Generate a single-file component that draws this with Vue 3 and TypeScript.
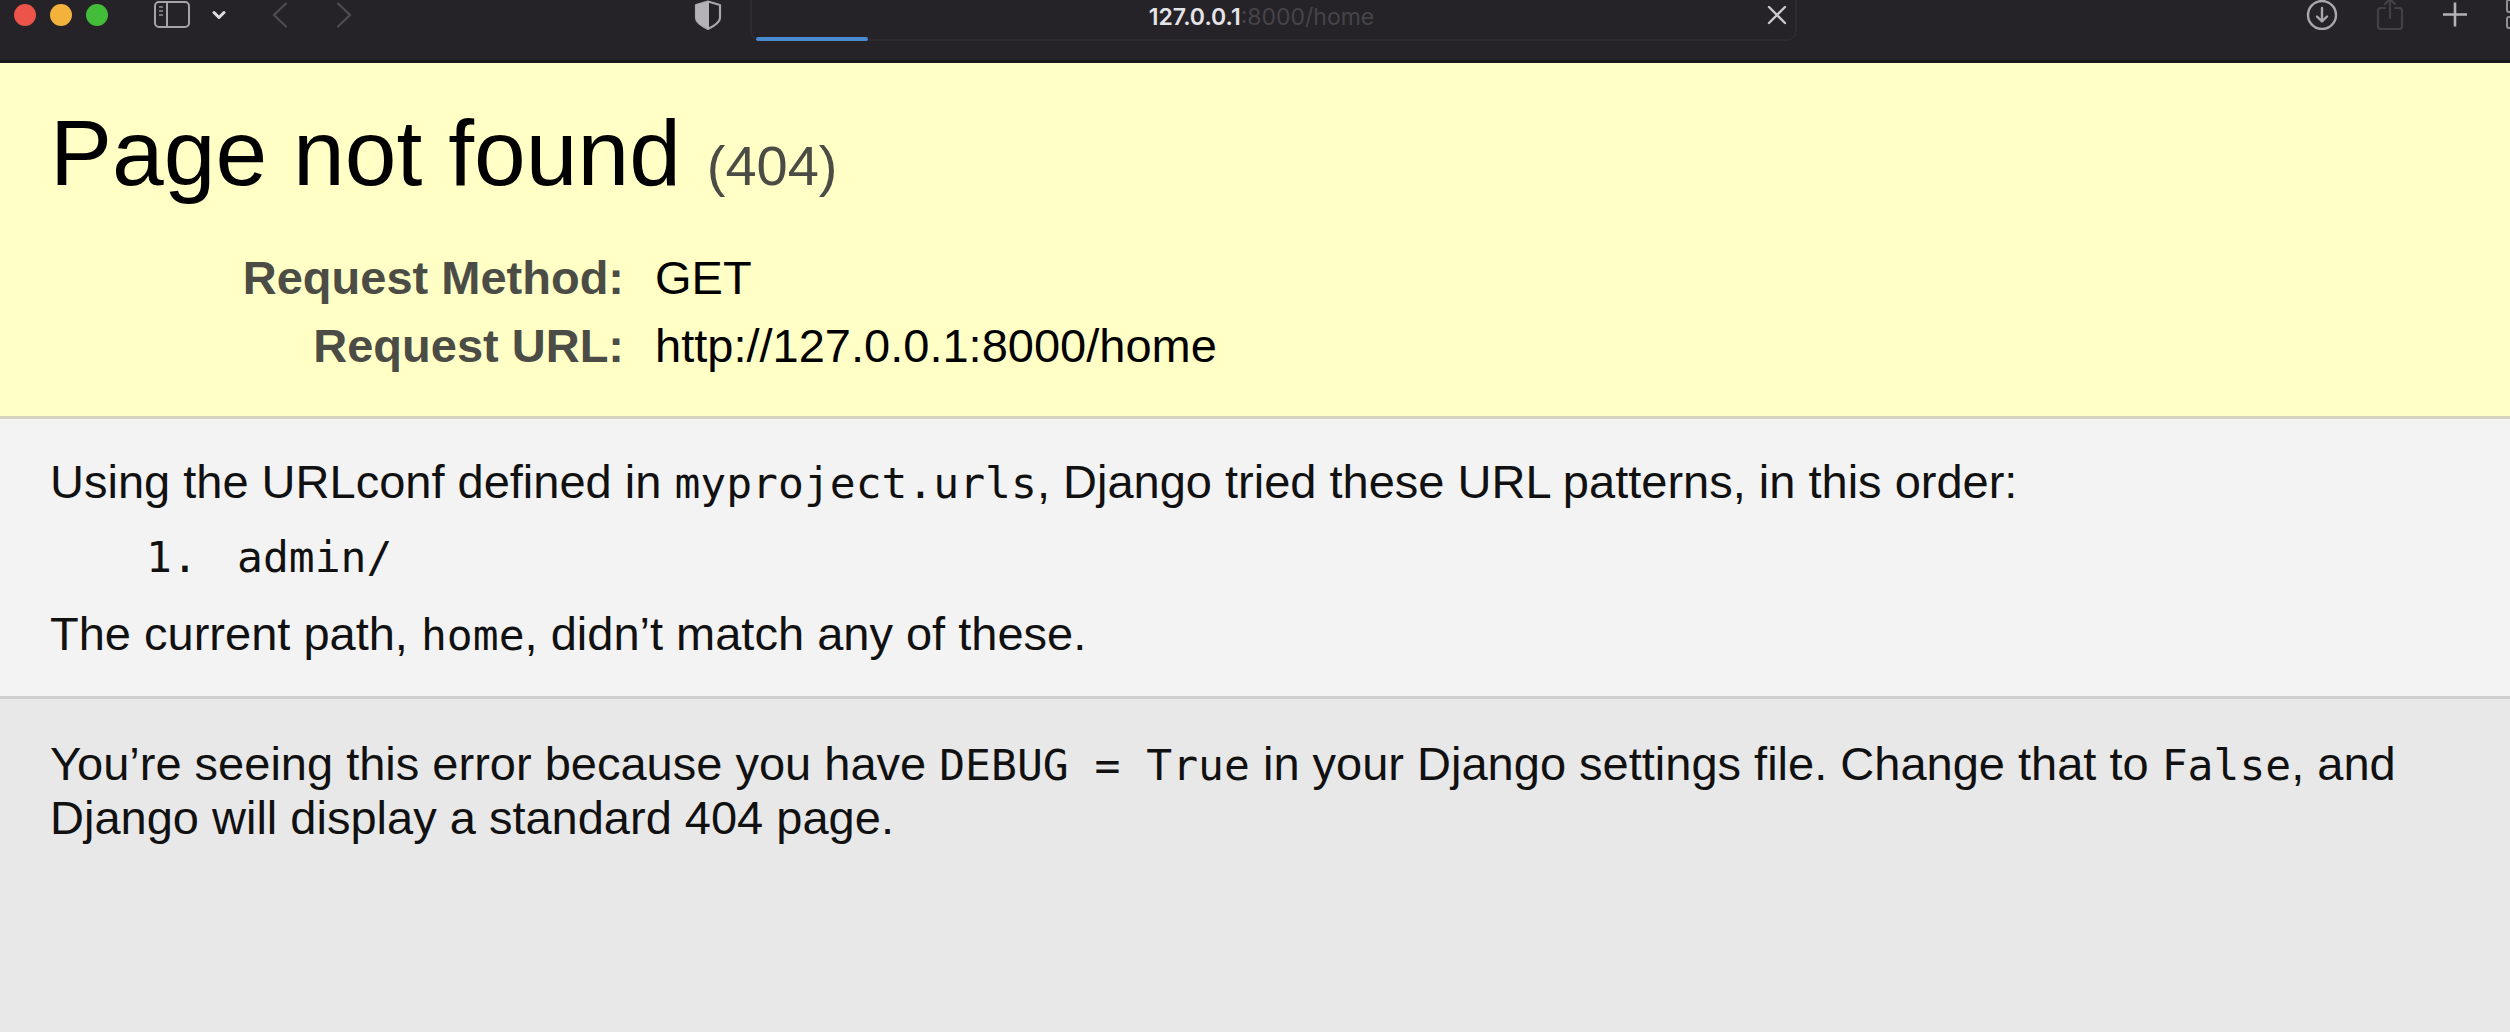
<script setup lang="ts">
interface Meta {
  label: string
  value: string
}

const meta: Meta[] = [
  { label: 'Request Method:', value: 'GET' },
  { label: 'Request URL:', value: 'http://127.0.0.1:8000/home' },
]

const patterns: string[] = ['admin/']
</script>

<template>
  <div class="window">
    <header class="toolbar">
      <div class="group left">
        <div class="lights">
          <button class="light red" aria-label="Close window"></button>
          <button class="light amber" aria-label="Minimise window"></button>
          <button class="light green" aria-label="Zoom window"></button>
        </div>
        <button class="tool sidebar" aria-label="Show sidebar">
          <svg width="36" height="30" viewBox="0 0 36 30" fill="none" stroke="#a5a3a8" stroke-width="2">
            <rect x="1" y="2" width="34" height="25" rx="4" />
            <path d="M13 2v25" />
            <path d="M5 7h4M5 11h4M5 15h4" stroke="#77757a" />
          </svg>
        </button>
        <button class="tool menu" aria-label="Sidebar menu">
          <svg width="14" height="30" viewBox="0 0 14 30" fill="none" stroke="#dddce0" stroke-width="3" stroke-linecap="round" stroke-linejoin="round">
            <path d="M2 12.500l5 5 5-5" />
          </svg>
        </button>
        <button class="tool back" aria-label="Back">
          <svg width="16" height="30" viewBox="0 0 16 30" fill="none" stroke="#4e4c52" stroke-width="2.200" stroke-linecap="round">
            <path d="M14 3.500L2 15l12 11.500" />
          </svg>
        </button>
        <button class="tool forward" aria-label="Forward">
          <svg width="16" height="30" viewBox="0 0 16 30" fill="none" stroke="#4e4c52" stroke-width="2.200" stroke-linecap="round">
            <path d="M2 3.500L14 15 2 26.500" />
          </svg>
        </button>
        <button class="tool shield" aria-label="Privacy report">
          <svg width="28" height="30" viewBox="0 0 28 30">
            <path d="M14 1.500L26 5v13c0 4-5 7.500-12 11C7 25.500 2 22 2 18V5z" fill="none" stroke="#a9a7ac" stroke-width="2.200" stroke-linejoin="round" />
            <path d="M15 1.500L2 5v13c0 4 5 7.500 13 11z" fill="#b4b2b7" />
          </svg>
        </button>
      </div>

      <div class="address">
        <button class="url"><span class="host">127.0.0.1</span><span class="path">:8000/home</span></button>
        <button class="tool stop" aria-label="Stop loading">
          <svg width="20" height="30" viewBox="0 0 20 30" fill="none" stroke="#c9c8cc" stroke-width="2.400" stroke-linecap="round">
            <path d="M2 7l16 16M18 7L2 23" />
          </svg>
        </button>
        <div class="progress"></div>
      </div>

      <div class="group right">
        <button class="tool" aria-label="Downloads">
          <svg width="32" height="30" viewBox="0 0 32 30" fill="none" stroke="#a9a7ac" stroke-width="2.400" stroke-linecap="round" stroke-linejoin="round">
            <circle cx="16" cy="15" r="14" />
            <path d="M16 8v13M11 16.500l5 5 5-5" />
          </svg>
        </button>
        <button class="tool" aria-label="Share">
          <svg width="28" height="30" viewBox="0 0 28 30" fill="none" stroke="#434147" stroke-width="2.200" stroke-linecap="round" stroke-linejoin="round">
            <path d="M9 8H5a3 3 0 0 0-3 3v15a3 3 0 0 0 3 3h18a3 3 0 0 0 3-3V11a3 3 0 0 0-3-3h-4M14 18V0M9 4l5-5 5 5" />
          </svg>
        </button>
        <button class="tool" aria-label="New tab">
          <svg width="26" height="30" viewBox="0 0 26 30" fill="none" stroke="#b4b2b7" stroke-width="2.600">
            <path d="M1 14.500h24M13 2.500v24" />
          </svg>
        </button>
        <button class="tool" aria-label="Tab overview">
          <svg width="30" height="30" viewBox="0 0 30 30" fill="none" stroke="#908e93" stroke-width="2">
            <rect x="1" y="0" width="12" height="12" rx="2" />
            <rect x="17" y="0" width="12" height="12" rx="2" />
            <rect x="1" y="17" width="12" height="11" rx="2" />
            <rect x="17" y="17" width="12" height="11" rx="2" />
          </svg>
        </button>
      </div>
    </header>

    <main class="page">
      <section class="summary">
        <h1>Page not found <small>(404)</small></h1>
        <table class="meta">
          <tbody>
            <tr v-for="row in meta" :key="row.label">
              <th scope="row">{{ row.label }}</th>
              <td>{{ row.value }}</td>
            </tr>
          </tbody>
        </table>
      </section>

      <section class="info">
        <p>Using the URLconf defined in <code>myproject.urls</code>, Django tried these URL patterns, in this order:</p>
        <ol>
          <li v-for="(pattern, i) in patterns" :key="pattern">
            <span class="num">{{ i + 1 }}.</span><span>{{ pattern }}</span>
          </li>
        </ol>
        <p>The current path, <code>home</code>, didn’t match any of these.</p>
      </section>

      <section class="explanation">
        <p>
          You’re seeing this error because you have <code>DEBUG = True</code> in your Django settings file. Change that
          to <code>False</code>, and Django will display a standard 404 page.
        </p>
      </section>
    </main>
  </div>
</template>

<style>
body {
  margin: 0;
  background: #e8e8e8;
}
</style>

<style scoped>
.window {
  min-height: 100vh;
  display: flex;
  flex-direction: column;
  overflow: hidden;
  font-family: "Liberation Sans", Arial, sans-serif;
  color: #000;
}

/* Browser toolbar */
.toolbar {
  display: grid;
  grid-template-columns: 750px minmax(0, 1fr) 713px;
  align-items: start;
  height: 60px;
  background: #252328;
  border-bottom: 3px solid #19161c;
  overflow: hidden;
}

button {
  display: block;
  margin: 0;
  padding: 0;
  border: 0;
  background: none;
  font: inherit;
}

.group {
  display: flex;
  align-items: center;
  height: 30px;
}

.left {
  padding-left: 14px;
}

.lights {
  display: flex;
  gap: 14px;
}

.light {
  width: 22px;
  height: 22px;
  border-radius: 50%;
}

.red {
  background: #ec5349;
}

.amber {
  background: #f2b23c;
}

.green {
  background: #43bd39;
}

.tool svg {
  display: block;
}

.sidebar {
  margin-left: 46px;
}

.menu {
  margin-left: 22px;
}

.back {
  margin-left: 46px;
}

.forward {
  margin-left: 48px;
}

.shield {
  margin-left: auto;
  margin-right: 28px;
}

.address {
  position: relative;
  display: flex;
  align-items: flex-start;
  height: 41px;
  box-sizing: border-box;
  border: 2px solid #2d2b30;
  border-top: 0;
  border-radius: 0 0 10px 10px;
}

.url {
  flex: 1;
  padding-left: 4px;
  text-align: center;
  font-family: Inter, "Liberation Sans", sans-serif;
  font-size: 23px;
  line-height: 34px;
}

.host {
  color: #e4e3e7;
  font-weight: 600;
}

.path {
  color: #464449;
}

.stop {
  margin-right: 8px;
}

.progress {
  position: absolute;
  left: 4px;
  bottom: -2px;
  width: 112px;
  height: 4px;
  border-radius: 2px;
  background: #4a8ad0;
}

.right {
  justify-content: flex-end;
  gap: 38px;
  margin-right: -26px;
}

/* Error page */
.page {
  flex: 1;
  display: flex;
  flex-direction: column;
  font-size: 47px;
  line-height: 54px;
}

.summary {
  padding: 37px 50px 36px;
  background: #ffffc6;
  border-bottom: 3px solid #d6d4bf;
}

h1 {
  margin: 0 0 37px;
  font-size: 93px;
  line-height: 107px;
  font-weight: 400;
}

small {
  font-size: 56px;
  line-height: 1;
  color: #4c4c46;
}

.meta {
  width: 100%;
  border-collapse: collapse;
}

.meta th,
.meta td {
  padding: 7px 0;
  text-align: left;
  font-weight: 400;
}

.meta th {
  width: 574px;
  padding-right: 31px;
  text-align: right;
  font-weight: 700;
  color: #4c4c46;
}

p,
ol {
  margin: 0;
}

code,
ol {
  font-family: "DejaVu Sans Mono", monospace;
  font-size: 43px;
}

code {
  line-height: 1;
}

.info {
  padding: 36px 50px 35px;
  background: #f3f3f3;
  border-bottom: 3px solid #cfcfcf;
  color: #111;
}

ol {
  padding: 21px 0 23px 96px;
  list-style: none;
}

li {
  display: flex;
}

.num {
  width: 91px;
}

.explanation {
  flex: 1;
  padding: 38px 50px;
  background: #e8e8e8;
  color: #111;
}
</style>
